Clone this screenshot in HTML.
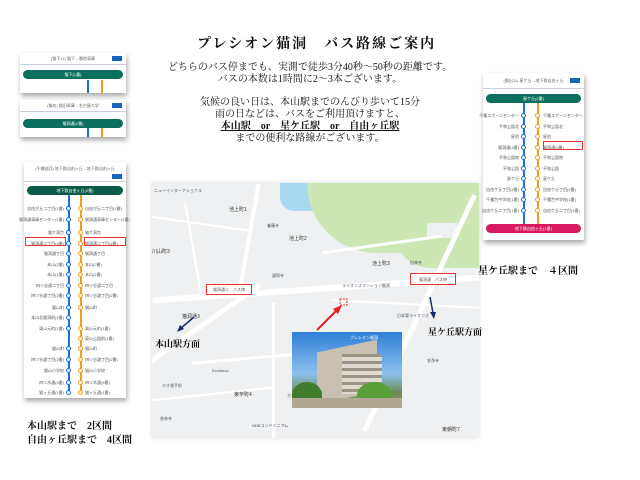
<!DOCTYPE html>
<html><head><meta charset="utf-8"><style>
*{margin:0;padding:0;box-sizing:border-box}
body{width:640px;height:480px;background:#fff;position:relative;overflow:hidden;font-family:"Liberation Serif","Noto Serif CJK SC",serif;color:#111}
.a{position:absolute}
.card{position:absolute;background:#fff;box-shadow:1px 3px 5px rgba(0,0,0,.35)}
.hd{position:absolute;left:0;right:0;top:0;height:12px;border-bottom:1px solid #ccd;font:4px "Liberation Sans","Noto Sans CJK JP",sans-serif;color:#666;text-align:center;line-height:12px}
.btn{position:absolute;right:4px;width:10px;height:5px;background:#1565c0;top:3px}
.pill{position:absolute;height:9px;border-radius:5px;background:#0a6f5c;color:#fff;font:4px "Liberation Sans","Noto Sans CJK JP",sans-serif;text-align:center;line-height:9px}
.ln{position:absolute;width:1.5px}
.st{position:absolute;font:4px "Liberation Sans","Noto Sans CJK JP",sans-serif;color:#555;white-space:nowrap}
.d{position:absolute;width:5px;height:5px;border-radius:50%;background:#fff}
.db{border:1.3px solid #1e6fd8}.do{border:1.3px solid #f0a020}
.mt{position:absolute;font:4px "Liberation Sans","Noto Sans CJK JP",sans-serif;color:#556;white-space:nowrap}
.rd{position:absolute;background:#fff}
p{text-align:center}
</style></head><body>

<div class="a" style="left:197px;top:33px;font-size:14px;font-weight:bold;letter-spacing:2px">プレシオン猫洞　バス路線ご案内</div>
<div class="a" style="left:150px;top:62px;width:320px;font-size:10px;line-height:12px">
<p>どちらのバス停までも、実測で徒歩3分40秒～50秒の距離です。</p>
<p>バスの本数は1時間に2～3本ございます。</p>
<p style="margin-top:11px">気候の良い日は、本山駅までのんびり歩いて15分</p>
<p>雨の日などは、バスをご利用頂けますと、</p>
<p style="font-weight:bold"><span style="text-decoration:underline">本山駅　or　星ケ丘駅　or　自由ヶ丘駅</span></p>
<p>までの便利な路線がございます。</p>
</div>

<div class="card" style="left:20px;top:53px;width:106px;height:40px"><div class="hd">(猫下11) 猫下→勝地車庫</div><div class="btn"></div>
<div class="pill" style="left:3px;right:3px;top:17px">猫下(1番)</div><div class="ln" style="left:67px;top:27px;height:13px;background:#1e6fd8"></div><div class="ln" style="left:81px;top:27px;height:13px;background:#f0a020"></div></div>
<div class="card" style="left:20px;top:100px;width:106px;height:37px"><div class="hd">(猫名) 猫田車庫→名古屋大学</div><div class="btn"></div>
<div class="pill" style="left:3px;right:3px;top:19px">猫洞通(2番)</div><div class="ln" style="left:67px;top:28px;height:9px;background:#1e6fd8"></div><div class="ln" style="left:81px;top:28px;height:9px;background:#f0a020"></div></div>

<div class="card" style="left:24px;top:162px;width:102px;height:236px">
<div class="hd" style="height:20px;line-height:9px;padding-top:2px">(千種巡回) 地下鉄自由ヶ丘→地下鉄自由ヶ丘</div><div class="btn" style="top:12px"></div>
<div class="pill" style="left:3px;right:3px;top:24px;background:#0b5a48">地下鉄自由ヶ丘(2番)</div>
<div class="ln" style="left:44px;top:33px;height:198px;background:#1e6fd8"></div>
<div class="ln" style="left:56px;top:33px;height:198px;background:#f0a020"></div>
</div>

<div class="card" style="left:483px;top:73px;width:101px;height:167px">
<div class="hd" style="height:16px;line-height:16px">(猫出11) 星ケ丘→地下鉄自由ヶ丘</div><div class="btn" style="top:5px"></div>
<div class="pill" style="left:3px;right:3px;top:21px">星ケ丘(2番)</div>
<div class="ln" style="left:40px;top:30px;height:123px;background:#1e6fd8"></div>
<div class="ln" style="left:54px;top:30px;height:123px;background:#f0a020"></div>
<div class="pill" style="left:3px;right:3px;top:151px;background:#d81b60">地下鉄自由ヶ丘(1番)</div>
</div>

<!-- map -->
<div class="a" style="left:152px;top:183px;width:327px;height:255px;background:#eef0f2;overflow:hidden;box-shadow:0 0 4px rgba(0,0,0,.15)">
 <div class="a" style="left:128px;top:0;width:70px;height:28px;background:#a8d8f0;border-radius:0 0 40px 20px"></div>
 <div class="a" style="left:155px;top:0;width:175px;height:70px;background:#cde7b4;border-radius:0 0 0 90px"></div>
 <div class="a" style="left:240px;top:40px;width:90px;height:45px;background:#cde7b4;border-radius:0 0 0 40px"></div>
 <div class="a" style="left:275px;top:40px;width:30px;height:15px;background:#eef0f2"></div>
 <div class="rd" style="left:0;top:103px;width:330px;height:6px;transform:rotate(-4deg)"></div>
 <div class="rd" style="left:-20px;top:140px;width:140px;height:5px;transform:rotate(-35deg)"></div>
 <div class="rd" style="left:265px;top:0;width:5px;height:260px;transform:rotate(25deg)"></div>
 <div class="rd" style="left:95px;top:0;width:4px;height:110px;transform:rotate(10deg)"></div>
 <div class="rd" style="left:170px;top:60px;width:120px;height:3px;transform:rotate(-8deg)"></div>
 <div class="rd" style="left:40px;top:170px;width:200px;height:3px;transform:rotate(-5deg)"></div>
 <div class="rd" style="left:120px;top:120px;width:3px;height:140px"></div>
 <div class="rd" style="left:0;top:40px;width:100px;height:2px;transform:rotate(8deg)"></div>
 <div class="rd" style="left:40px;top:20px;width:2px;height:90px;transform:rotate(-10deg)"></div>
 <div class="rd" style="left:180px;top:120px;width:150px;height:2px;transform:rotate(3deg)"></div>
 <div class="rd" style="left:0;top:210px;width:120px;height:2px;transform:rotate(-6deg)"></div>
 <div class="mt" style="left:2px;top:5px">ニューインターナショナル</div>
 <div class="mt" style="left:77px;top:23px;font-size:5px;color:#333">池上町1</div>
 <div class="mt" style="left:137px;top:52px;font-size:5px;color:#333">池上町2</div>
 <div class="mt" style="left:220px;top:77px;font-size:5px;color:#333">池上町3</div>
 <div class="mt" style="left:0;top:65px;font-size:5px;color:#333">川山町3</div>
 <div class="mt" style="left:115px;top:40px">養蓮寺</div>
 <div class="mt" style="left:120px;top:90px">遍照寺</div>
 <div class="mt" style="left:258px;top:77px">松林寺</div>
 <div class="mt" style="left:30px;top:130px;font-size:5px;color:#333">猫洞通3</div>
 <div class="mt" style="left:82px;top:208px;font-size:5px;color:#333">東芋町4</div>
 <div class="mt" style="left:8px;top:233px">香林寺</div>
 <div class="mt" style="left:290px;top:243px;font-size:5px;color:#333">東朝町7</div>
 <div class="mt" style="left:135px;top:210px">ガーデンエルスクエア</div>
 <div class="mt" style="left:275px;top:175px">安浄寺</div>
 <div class="mt" style="left:100px;top:240px">NDBコンドミニアム</div>
 <div class="mt" style="left:245px;top:130px">日本電ライオンズ</div>
 <div class="mt" style="left:190px;top:100px">ライオンズマンション猫洞</div>
 <div class="mt" style="left:60px;top:185px">Ecoldnup</div>
 <div class="mt" style="left:10px;top:200px">ホオ香手前</div>
</div>
<div class="a" style="left:206px;top:284px;width:46px;height:11px;border:1px solid #e33;background:#fff;font:4px 'Liberation Sans','Noto Sans CJK JP',sans-serif;text-align:center;line-height:10px;color:#555">猫洞通二　バス停</div>
<div class="a" style="left:410px;top:273px;width:46px;height:12px;border:1px solid #e33;background:#fff;font:4px 'Liberation Sans','Noto Sans CJK JP',sans-serif;text-align:center;line-height:11px;color:#555">猫洞通　バス停</div>
<svg class="a" style="left:150px;top:183px" width="330" height="260">
 <line x1="167" y1="147" x2="188" y2="126" stroke="#e82020" stroke-width="2"/><polygon points="192,122 183,126 188,131" fill="#e82020"/>
 <line x1="44" y1="134" x2="30" y2="146" stroke="#1a2a6c" stroke-width="1.5"/><polygon points="27,149 30,142 34,146" fill="#1a2a6c"/>
 <line x1="280" y1="114" x2="283" y2="130" stroke="#1a2a6c" stroke-width="1.5"/><polygon points="284,136 280,129 286,129" fill="#1a2a6c"/>
 <rect x="190" y="116" width="7" height="6" fill="none" stroke="#e33" stroke-dasharray="2,1"/>
</svg>
<div class="a" style="left:155px;top:337px;font-size:9px;font-weight:bold">本山駅方面</div>
<div class="a" style="left:428px;top:325px;font-size:9px;font-weight:bold">星ケ丘駅方面</div>
<div class="a" style="left:292px;top:332px;width:110px;height:76px;background:linear-gradient(#2f7fd8,#8cc0ee 55%,#6b8a55 80%,#8a9a7a);overflow:hidden">
 <div class="a" style="left:25px;top:14px;width:60px;height:52px;background:#c8c0b0;transform:skewY(-12deg)"></div>
 <div class="a" style="left:50px;top:22px;width:40px;height:40px;background:repeating-linear-gradient(#9a9488 0 3px,#e0dbd0 3px 7px)"></div>
 <div class="a" style="left:0;top:50px;width:30px;height:26px;background:#3f7d2c;border-radius:50% 50% 0 0"></div>
 <div class="a" style="left:65px;top:50px;width:35px;height:26px;background:#5aa03a;border-radius:50% 50% 0 0"></div>
 <div class="a" style="left:0;top:66px;width:110px;height:10px;background:#b0a890"></div>
 <div class="mt" style="left:58px;top:3px;color:#fff">プレシオン猫洞</div>
</div>

<div class="a" style="left:478px;top:262px;font-size:10px;font-weight:bold">星ケ丘駅まで　４区間</div>
<div class="a" style="left:27px;top:420px;font-size:10px;font-weight:bold;line-height:14px">本山駅まで　2区間<br>自由ヶ丘駅まで　4区間</div>

<div class="a" id="lrows"></div>
<div class="a" style="left:25px;top:237px;width:41px;height:9px;border:1px solid #e33"></div>
<div class="a" style="left:84px;top:237px;width:42px;height:9px;border:1px solid #e33"></div>
<div class="a" style="left:543px;top:141px;width:40px;height:9px;border:1px solid #e33"></div>
<script>
(function(){
var L=[["自由が丘二丁目(1番)",208],["猫洞通車庫センター(1番)",219],["猫ケ洞台",232],["猫洞通二丁目(2番)",243],["猫洞通丁目",253],["本山(2番)",264],["本山(1番)",274],["四ツ谷通二丁目",285],["四ツ谷通丁目(2番)",295],["猫山町",307],["本山北猫洞前(1番)",317],["東山元町(1番)",328],["",338],["猫山町",348],["四ツ谷通丁目(2番)",359],["猫山小学校",370],["四ツ木通(4番)",382],["猫ヶ丘通(1番)",392]];
var h="";
L.forEach(function(r,i){var y=r[1];
 if(i!=12){h+='<div class="d db" style="left:66px;top:'+(y-2)+'px"></div><div class="st" style="right:'+(640-64)+'px;top:'+(y-2)+'px">'+r[0]+'</div>';}
 if(i!=10){h+='<div class="d do" style="left:78px;top:'+(y-2)+'px"></div><div class="st" style="left:85px;top:'+(y-2)+'px">'+(r[0]||"東山公園前(1番)")+'</div>';}
});
var R=["千種スポーツセンター","平和公園北","星池","猫洞通(3番)","平和公園南","平和公園","星ケ丘","自由ケ丘丁目(2番)","千種台中学校(1番)","自由ケ丘二丁目(1番)"];
R.forEach(function(t,i){var y=115+i*10.5;
 h+='<div class="d db" style="left:521px;top:'+(y-2)+'px"></div><div class="st" style="right:'+(640-519)+'px;top:'+(y-2)+'px">'+t+'</div>';
 h+='<div class="d do" style="left:535px;top:'+(y-2)+'px"></div><div class="st" style="left:543px;top:'+(y-2)+'px">'+t+'</div>';});
document.getElementById("lrows").outerHTML=h;
})();
</script>
</body></html>
